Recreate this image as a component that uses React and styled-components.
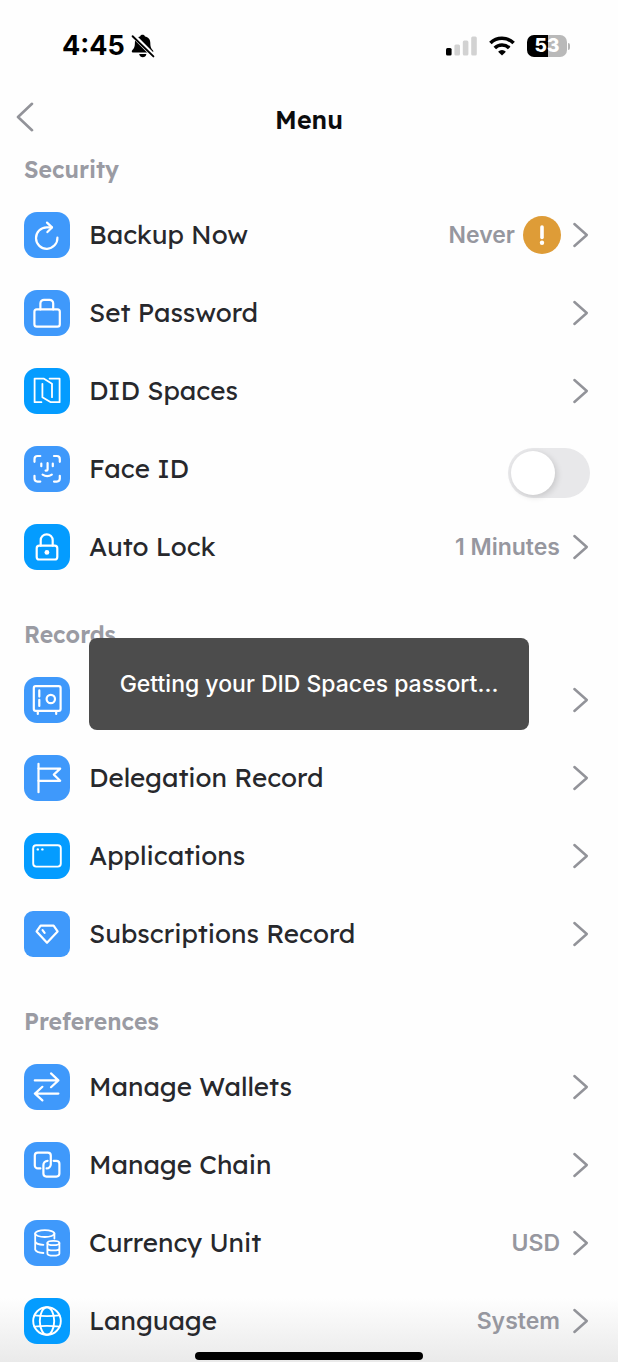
import React, { useState } from 'react';
import styled, { createGlobalStyle } from 'styled-components';

const GlobalStyle = createGlobalStyle`
  * {
    box-sizing: border-box;
  }

  body {
    margin: 0;
    background: #fefefe;
    font-family: "Inter", "Liberation Sans", sans-serif;
  }
`;

const Screen = styled.div`
  position: relative;
  min-height: 100vh;
  background: linear-gradient(to top, #eaeaea, #fefefe 64px);
`;

const StatusBar = styled.div`
  display: flex;
  align-items: center;
  justify-content: space-between;
  height: 92px;
  padding: 0 48px 0 62px;
`;

const StatusGroup = styled.div`
  display: flex;
  align-items: center;
  gap: ${(props) => props.$gap}px;
`;

const Clock = styled.span`
  font-size: 27px;
  font-weight: 700;
  line-height: 32px;
  color: #000;
`;

const Battery = styled.span`
  display: flex;
  align-items: center;
  gap: 1px;

  &::after {
    content: '';
    width: 2px;
    height: 7px;
    border-radius: 0 2px 2px 0;
    background: #b5b5b5;
  }
`;

const BatteryLevel = styled.span`
  width: 40px;
  border-radius: 7px;
  background: linear-gradient(to right, #000 53%, #b9b9b9 53%);
  color: #fff;
  font-size: 19px;
  font-weight: 800;
  line-height: 22px;
  text-align: center;
`;

const Header = styled.header`
  display: grid;
  grid-template-columns: 48px 1fr 48px;
  align-items: center;
  height: 56px;
`;

const BackButton = styled.button`
  display: flex;
  padding: 0 0 6px 16px;
  border: none;
  background: none;
  cursor: pointer;
`;

const Title = styled.h1`
  margin: 0;
  font-family: "Lexend", "Inter", sans-serif;
  font-size: 25px;
  font-weight: 600;
  line-height: 32px;
  text-align: center;
  color: #0c0c0d;
`;

const Content = styled.main`
  display: flex;
  flex-direction: column;
  gap: 35px;
  padding-top: 8px;
`;

const SectionTitle = styled.h2`
  margin: 0;
  padding: 0 24px 12px;
  font-family: "Lexend", "Inter", sans-serif;
  font-size: 23px;
  font-weight: 600;
  line-height: 28px;
  color: #9a9ba3;
`;

const Row = styled.div`
  display: flex;
  align-items: center;
  width: 100%;
  height: 78px;
  padding: 10px 28px 10px 24px;
  border: none;
  background: none;
  text-align: left;
  font-family: inherit;
  cursor: pointer;
`;

const Tile = styled.span`
  flex: none;
  display: flex;
  width: 46px;
  height: 46px;
  border-radius: ${(props) => (props.$square ? 9 : 13)}px;
  background: ${(props) => (props.$bright ? '#049cff' : '#3f99fb')};
`;

const Label = styled.span`
  flex: 1;
  padding-left: 19px;
  font-family: "Lexend", "Inter", sans-serif;
  font-size: 26px;
  font-weight: 400;
  line-height: 32px;
  color: #27282c;
`;

const Value = styled.span`
  margin-right: ${(props) => (props.$badge ? 8 : 12)}px;
  font-size: 23px;
  font-weight: 600;
  line-height: 28px;
  color: #96979f;
`;

const Badge = styled.span`
  display: flex;
  width: 38px;
  height: 38px;
  margin-right: 11px;
  border-radius: 50%;
  background: #de9c37;
`;

const Switch = styled.input`
  appearance: none;
  align-self: flex-end;
  width: 82px;
  height: 50px;
  margin: 0;
  padding: 3px;
  border-radius: 25px;
  background: #e8e8ea;
  cursor: pointer;

  &::before {
    content: '';
    display: block;
    width: 44px;
    height: 44px;
    border-radius: 50%;
    background: #fff;
    box-shadow: 2px 2px 6px rgba(0, 0, 0, 0.14);
    transition: margin-left 0.2s;
  }

  &:checked {
    background: #34c759;
  }

  &:checked::before {
    margin-left: 32px;
  }
`;

const ToastLayer = styled.div`
  position: fixed;
  inset: 6px 0 0;
  display: flex;
  align-items: center;
  justify-content: center;
  pointer-events: none;
`;

const Toast = styled.div`
  padding: 30px 31px;
  border-radius: 8px;
  background: #4c4c4c;
  color: #fff;
  font-size: 23px;
  font-weight: 500;
  line-height: 32px;
  white-space: nowrap;
`;

const HomeIndicator = styled.div`
  position: fixed;
  bottom: 2px;
  left: 50%;
  width: 228px;
  height: 8px;
  margin-left: -114px;
  border-radius: 4px;
  background: #000;
`;

const Glyph = ({ children }) => (
  <svg
    width="46"
    height="46"
    viewBox="0 0 46 46"
    fill="none"
    stroke="#fff"
    strokeWidth="2.2"
    strokeLinecap="round"
    strokeLinejoin="round"
    aria-hidden="true"
  >
    {children}
  </svg>
);

const icons = {
  backup: (
    <Glyph>
      <path d="M33.4 25.6a10.7 10.7 0 1 1-10.7-10.2h5" />
      <path d="M23 10.6l5 4.8-4.6 4.7" />
    </Glyph>
  ),
  password: (
    <Glyph>
      <rect x="10.4" y="19.4" width="25.4" height="17.2" rx="2.4" />
      <path d="M16.4 19.4v-6a3.6 3.6 0 0 1 3.6-3.6h5.6a3.6 3.6 0 0 1 3.6 3.6v6" />
    </Glyph>
  ),
  spaces: (
    <Glyph>
      <g strokeWidth="1.8">
        <path d="M17.4 34.2H10.6V10.6h9l8.4 5.2v13.4" />
        <path d="M25.6 10.6h10v23.6h-8.8l-8.4-5V15.8" />
      </g>
    </Glyph>
  ),
  face: (
    <Glyph>
      <path d="M10.5 15.8v-2.8a3 3 0 0 1 3-3h2.8M30 10h2.8a3 3 0 0 1 3 3v2.8M35.8 29.8v2.8a3 3 0 0 1-3 3H30M16.3 35.6h-2.8a3 3 0 0 1-3-3v-2.8" />
      <path d="M17.3 17.6v2.6M28.8 17.6v2.6M23.6 17.2v6.2q0 1.2-1.4 1.2h-.6" />
      <path d="M18.6 28.6q4.6 3 9.2 0" />
    </Glyph>
  ),
  lock: (
    <Glyph>
      <rect x="12.7" y="21.7" width="20.6" height="13.8" rx="2.6" />
      <path d="M16.7 21.7v-5.4a6 6 0 0 1 12 0v5.4" />
      <circle cx="22.9" cy="28.4" r="2.4" fill="#fff" stroke="none" />
    </Glyph>
  ),
  vault: (
    <Glyph>
      <rect x="9.8" y="9.2" width="26.8" height="24.6" rx="1.8" />
      <path d="M13.8 34v3M32.2 34v3M15.3 13.4v6.2M15.3 22.8v6.2" />
      <circle cx="26.8" cy="22" r="4.2" />
    </Glyph>
  ),
  flag: (
    <Glyph>
      <path d="M14.5 8.8v28.4" />
      <path d="M14.5 13.6h21.7l-6.4 6 6.4 6.2H14.5" />
    </Glyph>
  ),
  apps: (
    <Glyph>
      <rect x="9.2" y="12.2" width="27.6" height="21.4" rx="3" strokeWidth="1.9" />
      <circle cx="13.8" cy="16.4" r="1.2" fill="#fff" stroke="none" />
      <circle cx="18.4" cy="16.4" r="1.2" fill="#fff" stroke="none" />
    </Glyph>
  ),
  diamond: (
    <Glyph>
      <path d="M16.6 14.6h13l4 5.8L23 31.8 12.6 20.4z" />
      <path d="M18.6 19.2l2 2.6" />
    </Glyph>
  ),
  wallets: (
    <Glyph>
      <path d="M10.8 16.4h23.6M27 9.4l7.4 7-7.4 6.8" />
      <path d="M34.4 29.6H10.8M18.4 22.8l-7.4 6.8 7.4 6.8" />
    </Glyph>
  ),
  chain: (
    <Glyph>
      <path d="M16.4 26.4h-2.6a3 3 0 0 1-3-3V13.6a3 3 0 0 1 3-3h10a3 3 0 0 1 3 3v8.6a4.2 4.2 0 0 1-4.2 4.2" />
      <path d="M29.6 18.8h2.8a3 3 0 0 1 3 3v9.8a3 3 0 0 1-3 3h-10a3 3 0 0 1-3-3V23a4.2 4.2 0 0 1 4.2-4.2" />
    </Glyph>
  ),
  coins: (
    <Glyph>
      <g strokeWidth="1.8">
        <ellipse cx="20.8" cy="13.6" rx="9.6" ry="3.4" />
        <path d="M11.2 13.6v16q1 3 8.2 3.4M11.2 21.6q1 3 8.2 3.2M30.4 13.6v5" />
        <ellipse cx="29.4" cy="23" rx="6" ry="2.2" />
        <path d="M23.4 23v10.4c0 3 12 3 12 0V23M23.4 28.2c0 3 12 3 12 0" />
      </g>
    </Glyph>
  ),
  globe: (
    <Glyph>
      <g strokeWidth="1.9">
        <circle cx="23" cy="23" r="13.8" />
        <ellipse cx="23" cy="23" rx="7.2" ry="13.8" />
        <path d="M10.6 17.4q12.4 1.4 24.800 0M10.6 28.6q12.4-1.4 24.8 0" />
      </g>
    </Glyph>
  ),
};

const Chevron = () => (
  <svg width="18" height="26" viewBox="0 0 18 26" fill="none" stroke="#929399" strokeWidth="2.5" strokeLinecap="round" strokeLinejoin="round" aria-hidden="true">
    <path d="M2.4 2l12.4 11L2.4 24" />
  </svg>
);

const BackArrow = () => (
  <svg width="18" height="30" viewBox="0 0 18 30" fill="none" stroke="#929399" strokeWidth="2.6" strokeLinecap="round" strokeLinejoin="round" aria-hidden="true">
    <path d="M16 1.8L2 15l14 13.2" />
  </svg>
);

const MutedBell = () => (
  <svg width="24" height="24" viewBox="0 0 24 24" aria-hidden="true">
    <path d="M1.700 18.400c-.9 0-1.200-1-.6-1.800 1.600-2 2.800-3.200 2.800-7.800 0-3.600 2.200-5.800 5.200-6.300.3-2.300 4.500-2.300 4.900 0 3 .5 5.300 2.700 5.300 6.300 0 4.600 1.100 5.800 2.700 7.800.6.800.3 1.800-.6 1.800z" />
    <path d="M8.2 20h7.2c-.4 2.200-1.900 3.200-3.600 3.200S8.600 22.200 8.200 20z" />
    <path d="M2.2 1.400l21 21" stroke="#fefefe" strokeWidth="4.6" />
    <path d="M1.600 2.200l20.800 20.200" stroke="#000" strokeWidth="1.9" strokeLinecap="round" />
  </svg>
);

const Signal = () => (
  <svg width="31" height="20" viewBox="0 0 31 20" aria-hidden="true">
    <rect x="0" y="12" width="5.6" height="7.6" rx="1.5" />
    <g fill="#d2d2d2">
      <rect x="8.4" y="8.4" width="5.6" height="11.2" rx="1.5" />
      <rect x="16.8" y="4.4" width="5.6" height="15.2" rx="1.5" />
      <rect x="25.2" y=".4" width="5.6" height="19.2" rx="1.5" />
    </g>
  </svg>
);

const Wifi = () => (
  <svg width="26" height="20" viewBox="0 0 26 20" fill="none" stroke="#000" strokeWidth="3.6" aria-hidden="true">
    <path d="M1.4 7a16.600 16.600 0 0 1 23.200 0" />
    <path d="M5.800 12a10.200 10.200 0 0 1 14.400 0" />
    <path d="M13 19.600l-3.900-3.900a5.500 5.500 0 0 1 7.800 0z" fill="#000" stroke="none" />
  </svg>
);

const sections = [
  {
    title: 'Security',
    items: [
      { icon: 'backup', label: 'Backup Now', value: 'Never', badge: true },
      { icon: 'password', label: 'Set Password' },
      { icon: 'spaces', label: 'DID Spaces', bright: true },
      { icon: 'face', label: 'Face ID', toggle: true },
      { icon: 'lock', label: 'Auto Lock', value: '1 Minutes', bright: true },
    ],
  },
  {
    title: 'Records',
    items: [
      { icon: 'vault', name: 'Vault' },
      { icon: 'flag', label: 'Delegation Record' },
      { icon: 'apps', label: 'Applications', bright: true },
      { icon: 'diamond', label: 'Subscriptions Record', square: true },
    ],
  },
  {
    title: 'Preferences',
    items: [
      { icon: 'wallets', label: 'Manage Wallets' },
      { icon: 'chain', label: 'Manage Chain' },
      { icon: 'coins', label: 'Currency Unit', value: 'USD' },
      { icon: 'globe', label: 'Language', value: 'System', bright: true },
    ],
  },
];

const MenuItem = ({ item }) => {
  const [checked, setChecked] = useState(false);

  const start = (
    <>
      <Tile $bright={item.bright} $square={item.square}>
        {icons[item.icon]}
      </Tile>
      <Label>{item.label}</Label>
    </>
  );

  if (item.toggle) {
    return (
      <Row as="label">
        {start}
        <Switch type="checkbox" role="switch" checked={checked} onChange={(event) => setChecked(event.target.checked)} />
      </Row>
    );
  }

  return (
    <Row as="button" type="button" aria-label={item.name}>
      {start}
      {item.value && <Value $badge={item.badge}>{item.value}</Value>}
      {item.badge && (
        <Badge>
          <svg width="38" height="38" viewBox="0 0 38 38" aria-hidden="true">
            <path d="M19 11v10.5" stroke="#fff" strokeWidth="3.6" strokeLinecap="round" />
            <circle cx="19" cy="26.8" r="2.2" fill="#fff" />
          </svg>
        </Badge>
      )}
      <Chevron />
    </Row>
  );
};

const App = () => {
  return (
    <>
      <GlobalStyle />
      <Screen>
        <StatusBar>
          <StatusGroup $gap={6}>
            <Clock>4:45</Clock>
            <MutedBell />
          </StatusGroup>
          <StatusGroup $gap={12}>
            <Signal />
            <Wifi />
            <Battery>
              <BatteryLevel>53</BatteryLevel>
            </Battery>
          </StatusGroup>
        </StatusBar>
        <Header>
          <BackButton type="button" aria-label="Back">
            <BackArrow />
          </BackButton>
          <Title>Menu</Title>
        </Header>
        <Content>
          {sections.map((section) => (
            <section key={section.title}>
              <SectionTitle>{section.title}</SectionTitle>
              {section.items.map((item) => (
                <MenuItem key={item.icon} item={item} />
              ))}
            </section>
          ))}
        </Content>
        <ToastLayer>
          <Toast role="status">Getting your DID Spaces passort...</Toast>
        </ToastLayer>
        <HomeIndicator />
      </Screen>
    </>
  );
};

export default App;
